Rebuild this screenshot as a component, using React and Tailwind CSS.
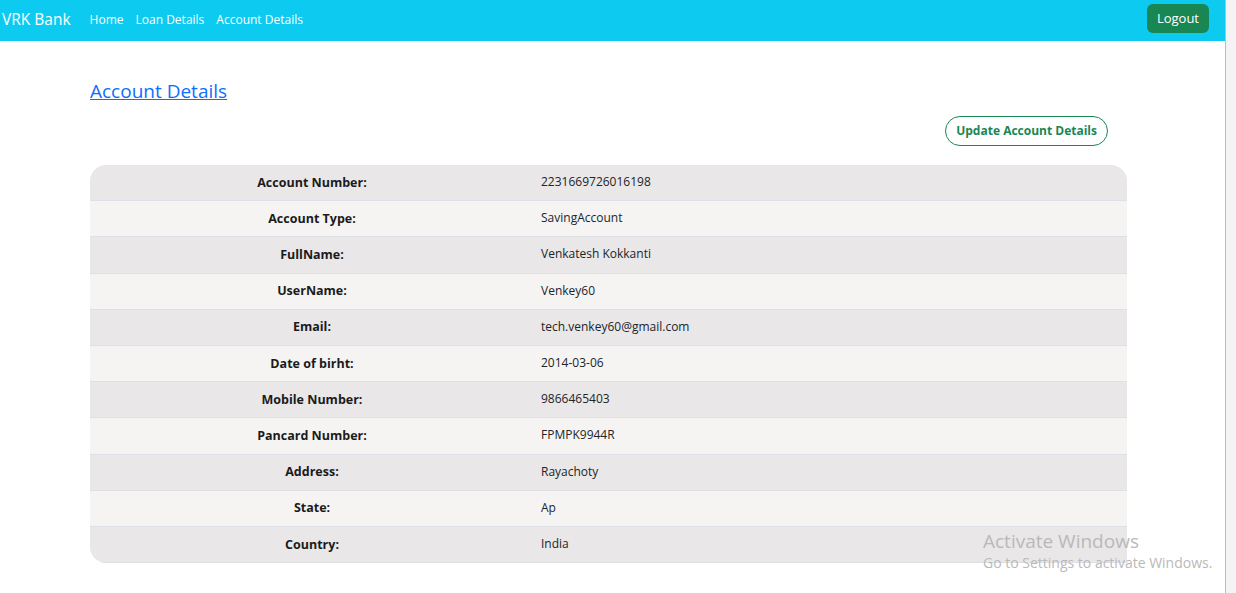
import React from 'react';

const rows = [
  ['Account Number:', '2231669726016198'],
  ['Account Type:', 'SavingAccount'],
  ['FullName:', 'Venkatesh Kokkanti'],
  ['UserName:', 'Venkey60'],
  ['Email:', 'tech.venkey60@gmail.com'],
  ['Date of birht:', '2014-03-06'],
  ['Mobile Number:', '9866465403'],
  ['Pancard Number:', 'FPMPK9944R'],
  ['Address:', 'Rayachoty'],
  ['State:', 'Ap'],
  ['Country:', 'India'],
];

const App = () => {
  return (
    <div className="flex h-[593px] w-[1236px] overflow-hidden bg-white font-['Open_Sans',sans-serif] text-[#212529]">
      <div className="relative w-[1225px]">
        {/* Navbar */}
        <nav className="flex h-[41px] items-start justify-between bg-[#0dcaf0] pl-[2px] pr-4">
          <div className="flex items-center pt-[9px]">
            <span className="text-[15.5px] leading-[20px] text-white">VRK Bank</span>
            <div className="ml-[19px] flex gap-[12px] pt-[1px] text-[12px] text-white">
              <span>Home</span>
              <span>Loan Details</span>
              <span>Account Details</span>
            </div>
          </div>
          <button className="mt-[4px] h-[29px] rounded-md bg-[#198754] px-[10px] text-[13px] text-white">Logout</button>
        </nav>

        {/* Content */}
        <div className="px-[90px] pr-[98px] pt-[37px]">
          <h2 className="text-[19px] leading-[26px] text-[#0d6efd] underline">Account Details</h2>
          <div className="mt-[12px] flex justify-end pr-[19px]">
            <button className="h-[30px] rounded-full border border-[#198754] px-[10px] text-[12px] font-bold text-[#198754]">
              Update Account Details
            </button>
          </div>

          <div className="mt-[19px] overflow-hidden rounded-tl-2xl rounded-tr-2xl rounded-bl-2xl text-[12.5px]">
            {rows.map(([label, value], i) => (
              <div
                key={label}
                className={`flex h-[36.2px] items-center border-b border-[#dde1e6] ${i % 2 === 0 ? 'bg-[#e9e7e8]' : 'bg-[#f5f4f3]'}`}
              >
                <div className="w-[444px] pt-[1px] text-center font-bold text-[#1b1b1b]">{label}</div>
                <div className="pl-[7px] pb-[1px] text-[12px]">{value}</div>
              </div>
            ))}
          </div>
        </div>

        {/* Windows watermark */}
        <div className="pointer-events-none absolute left-[983px] top-[529px] text-[#b9b9b9]">
          <div className="text-[19px] leading-[24px]">Activate Windows</div>
          <div className="text-[14px] leading-[20px]">Go to Settings to activate Windows.</div>
        </div>
      </div>
      <div className="w-[11px] border-l border-[#bdbdbd] bg-[#f4f4f4]"></div>
    </div>
  );
};

export default App;
